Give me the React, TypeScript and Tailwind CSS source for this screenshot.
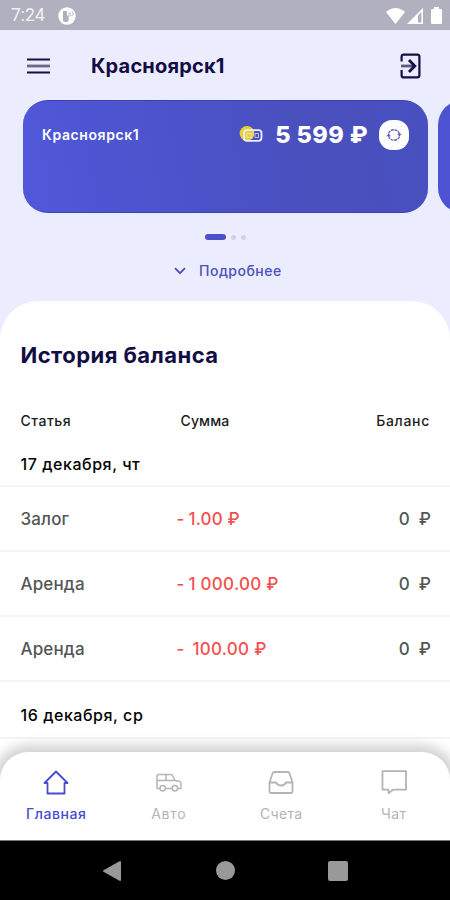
import React from "react";

const days = [
  {
    date: "17 декабря, чт",
    rows: [
      { name: "Залог", dash: "-", gap: "ml-[4px]", sum: "1.00 ₽", track: "tracking-[0.2px]" },
      { name: "Аренда", dash: "-", gap: "ml-[4px]", sum: "1 000.00 ₽", track: "tracking-[0.3px]" },
      { name: "Аренда", dash: "-", gap: "ml-[8px]", sum: "100.00 ₽", track: "tracking-[0.3px]" },
    ],
  },
];

function StatusBar() {
  return (
    <div className="flex h-[30px] shrink-0 items-center bg-[#b1b0be] pl-[11px] pr-[8px] pt-px text-white">
      <span className="font-['Roboto',sans-serif] text-[17.5px] leading-none text-[#f1f1f7]">7:24</span>
      <svg className="ml-[13px]" width="18" height="18" viewBox="0 0 18 18">
        <circle cx="9" cy="9" r="8.7" fill="#fff" />
        <path d="M5 4h8a2.6 2.6 0 0 1 0 5.2h-2.4V13a2 2 0 0 1-2 2H7a2 2 0 0 1-2-2z" fill="#b1b0be" />
        <path d="M9 3.500h5.500v5H9z" fill="#fff" />
        <path d="M10.500 5.500h2.500v2h-2.500z" fill="#c9c8d3" />
      </svg>
      <div className="ml-auto flex items-center">
        <svg width="19" height="16" viewBox="0 0 19 16">
          <path d="M0 4Q9.5-4 19 4L9.5 16z" fill="#fff" />
        </svg>
        <svg className="ml-[2px]" width="16" height="16" viewBox="0 0 16 16">
          <path d="M0 16L16 0v16z" fill="#fff" />
          <path d="M11 7.500l3.400-3.500v10.500H11z" fill="#b1b0be" />
        </svg>
        <svg className="ml-[8px]" width="11" height="17" viewBox="0 0 11 17">
          <path d="M3 0h5v2h2q1 0 1 1v13q0 1-1 1H1q-1 0-1-1V3q0-1 1-1h2z" fill="#fff" />
        </svg>
      </div>
    </div>
  );
}

function Header() {
  return (
    <header className="flex h-[70px] shrink-0 items-center pl-[27px] pr-[29px] pt-px">
      <svg width="23" height="16" viewBox="0 0 23 16">
        <path d="M0 1.500h23M0 14.500h23" stroke="#150f45" strokeWidth="2.200" />
        <path d="M0 8h23" stroke="#6a6788" strokeWidth="2.800" />
      </svg>
      <h1 className="ml-[41px] text-[20px] font-bold leading-none tracking-[0.2px] text-[#130d45]">Красноярск1</h1>
      <svg className="ml-auto" width="21" height="26" viewBox="0 0 21 26" fill="none" stroke="#150f45" strokeWidth="2.200">
        <path d="M1.600 8.500V3.800Q1.600 1.600 3.800 1.600h13.400Q19.400 1.600 19.400 3.800v18.400q0 2.200-2.200 2.200H3.800q-2.200 0-2.200-2.200V17" />
        <path d="M1 13h13" stroke="#5c587d" strokeWidth="2.800" />
        <path d="M9 7l5.800 6L9 19" strokeWidth="2.800" />
      </svg>
    </header>
  );
}

function BalanceCards() {
  return (
    <div className="flex h-[113px] shrink-0 gap-[10px] overflow-hidden pl-[23px]">
      <section className="w-[405px] shrink-0 rounded-[25px] border-y border-[#3d41b4] bg-[linear-gradient(80deg,#5058da_0%,#4b52c8_45%,#4a50bd_70%,#484fbf_100%)] pl-[19px] pr-[19px]">
        <div className="flex h-[67px] items-center text-white">
          <span className="text-[14px] font-semibold leading-none tracking-[0.6px]">Красноярск1</span>
          <svg className="ml-auto" width="24" height="18" viewBox="0 0 24 18" fill="none">
            <circle cx="8" cy="7.500" r="7.400" fill="#e8d032" />
            <rect x="5" y="4.200" width="17.500" height="10.600" rx="3" stroke="#eceefc" strokeWidth="1.800" />
            <path d="M8 7.500h6M8 11.500h6M12 7.500v4M8 7.500v4" stroke="#e4e3c0" strokeWidth="1" />
            <path d="M16 7.500h3.500v4H16z" fill="#4a50bd" stroke="#b9bff0" strokeWidth="1" />
          </svg>
          <span className="ml-[12px] text-[23.5px] font-extrabold leading-none tracking-[0.4px]">5 599 ₽</span>
          <span className="ml-[11px] flex size-[30px] items-center justify-center rounded-[13px] bg-white">
            <svg width="16" height="16" viewBox="0 0 16 16" fill="none" stroke="#5a5fae" strokeWidth="1.300">
              <path d="M2.500 6.500A5.800 5.800 0 0 1 13.500 7M13.500 9.500A5.800 5.800 0 0 1 2.500 9" strokeDasharray="3 .7" />
              <path d="M.3 9.200L2.600 6.500l2.300 2.700zM11.100 6.800l2.300 2.700 2.300-2.700z" fill="#5a5fae" stroke="none" />
            </svg>
          </span>
        </div>
      </section>
      <section className="w-[405px] shrink-0 rounded-[25px] bg-[#4d54d3]" />
    </div>
  );
}

function Sheet() {
  return (
    <main className="-mb-[40px] min-h-0 flex-1 overflow-hidden rounded-t-[38px] bg-white px-[20.5px] text-black">
      <h2 className="mt-[42px] text-[22px] font-bold leading-[24px] tracking-[0.45px] text-[#130d45]">История баланса</h2>
      <div className="mt-[43px] grid grid-cols-[160px_1fr_auto] text-[14px] font-medium leading-[22px] text-[#1c1c1c]">
        <span className="tracking-[0.5px]">Статья</span>
        <span className="tracking-[0.1px]">Сумма</span>
        <span className="-mr-[0.5px] tracking-[0.7px]">Баланс</span>
      </div>
      {days.map((day) => (
        <section key={day.date}>
          <h3 className="-mx-[21px] mt-[10px] h-[45px] border-b-2 border-[#f5f5f5] px-[21px] pt-[11px] text-[16px] font-medium leading-[22px] tracking-[0.55px]">
            {day.date}
          </h3>
          {day.rows.map((row) => (
            <div
              key={row.sum}
              className="-mx-[21px] grid h-[65px] grid-cols-[156px_1fr_auto] items-center border-b-2 border-[#f5f5f5] pl-[21px] pr-[19.500px] pt-[2px] text-[17px] leading-none text-[#555]"
            >
              <span className="font-medium tracking-[0.15px]">{row.name}</span>
              <span className="flex font-medium text-[#f4504f]">
                <span>{row.dash}</span>
                <span className={`${row.gap} ${row.track}`}>{row.sum}</span>
              </span>
              <span className="flex gap-[9px] font-medium">
                <span>0</span>
                <span>₽</span>
              </span>
            </div>
          ))}
        </section>
      ))}
      <h3 className="-mx-[21px] h-[57px] border-b-2 border-[#f5f5f5] px-[21px] pt-[22px] text-[16px] font-medium leading-[22px] tracking-[0.55px]">
        16 декабря, ср
      </h3>
    </main>
  );
}

function TabBar() {
  return (
    <nav className="relative grid h-[88px] shrink-0 grid-cols-4 rounded-t-[28px] bg-white text-[14px] text-[#b4b4b4] shadow-[0_0_12px_7px_rgba(0,0,0,0.18)]">
      <div className="flex flex-col items-center pt-[18px] font-medium text-[#464bd0]">
        <svg width="26" height="26" viewBox="0 0 26 26" fill="none" stroke="currentColor" strokeWidth="1.800" strokeLinejoin="round">
          <path d="M4.500 13H1.500L13 1.500l11.500 11.500h-3v10.500h-17z" />
        </svg>
        <span className="mt-[8px] leading-[20px] tracking-[0.6px]">Главная</span>
      </div>
      <div className="flex flex-col items-center pt-[18px]">
        <svg width="26" height="26" viewBox="0 0 26 26" fill="none" stroke="currentColor" strokeWidth="1.500" strokeLinejoin="round">
          <path d="M4 18.500H1V6.500Q1 4.500 3 4.500h11.500q1.500 0 2.200 1.500l2.300 4.500 4.500.8q1.500.3 1.500 2v5.200h-3M9.500 18.500h6.500M1 10.500h18M10 4.500v6" />
          <circle cx="6.700" cy="18.300" r="2.700" />
          <circle cx="18.900" cy="18.300" r="2.700" />
        </svg>
        <span className="mt-[8px] leading-[20px] tracking-[0.7px]">Авто</span>
      </div>
      <div className="flex flex-col items-center pt-[18px]">
        <svg width="26" height="26" viewBox="0 0 26 26" fill="none" stroke="currentColor" strokeWidth="1.800" strokeLinejoin="round">
          <path d="M1.500 12.500L4.500 3.500q.5-1.500 2-1.500h13q1.500 0 2 1.500l3 9V21.500q0 1.500-1.500 1.500H3Q1.500 23 1.500 21.500zh6.500q1.500 3 5 3t5-3h6.500" />
        </svg>
        <span className="mt-[8px] leading-[20px] tracking-[0.300px]">Счета</span>
      </div>
      <div className="flex flex-col items-center pt-[18px]">
        <svg width="26" height="26" viewBox="0 0 26 26" fill="none" stroke="currentColor" strokeWidth="1.800" strokeLinejoin="round">
          <path d="M1.500 1.200h23.500v18.500H12l-4.500 3.500v-3.500h-6z" />
        </svg>
        <span className="mt-[8px] leading-[20px] tracking-[0.5px]">Чат</span>
      </div>
    </nav>
  );
}

function SystemBar() {
  return (
    <div className="relative flex h-[60px] shrink-0 items-center border-t border-[#777] bg-black pl-[102px]">
      <svg width="20" height="22" viewBox="0 0 20 22">
        <path d="M2 11L18 2v18z" fill="#999" stroke="#999" strokeWidth="2" strokeLinejoin="round" />
      </svg>
      <span className="ml-[94px] size-[19px] rounded-full bg-[#999]" />
      <span className="ml-[93px] size-[20px] rounded-[2px] bg-[#999]" />
    </div>
  );
}

export default function App() {
  return (
    <div className="flex h-[900px] w-[450px] flex-col overflow-hidden bg-[#ebecfe] font-['Inter','Noto_Sans',sans-serif]">
      <StatusBar />
      <Header />
      <BalanceCards />
      <div className="mt-[21px] flex h-[6px] shrink-0 items-center gap-[5px] pl-[205px]">
        <span className="h-[6px] w-[21px] rounded-full bg-[#4b4fc9]" />
        <span className="size-[5px] rounded-full bg-[#d0d0e2]" />
        <span className="size-[5px] rounded-full bg-[#d0d0e2]" />
      </div>
      <div className="flex h-[61px] shrink-0 items-center pl-[174px] text-[#4c50bd]">
        <svg width="12" height="8" viewBox="0 0 12 8" fill="none" stroke="currentColor" strokeWidth="1.800">
          <path d="M1 1.200l5 5 5-5" />
        </svg>
        <span className="ml-[13px] text-[14px] font-medium leading-none tracking-[0.5px]">Подробнее</span>
      </div>
      <Sheet />
      <TabBar />
      <SystemBar />
    </div>
  );
}
